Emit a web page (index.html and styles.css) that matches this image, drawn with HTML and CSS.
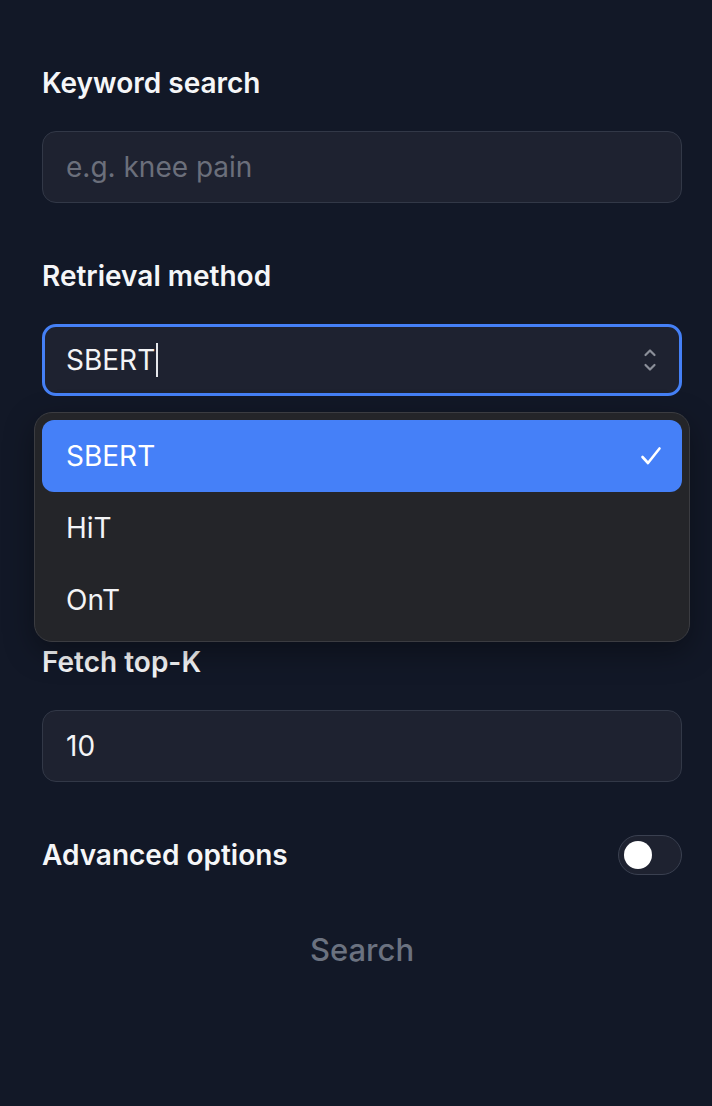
FILE: index.html
```html
<!DOCTYPE html>
<html lang="en">
<head>
<meta charset="utf-8">
<title>Search</title>
<link rel="stylesheet" href="styles.css">
</head>
<body>
<main class="form">
  <div class="field">
    <label class="label">Keyword search</label>
    <div class="input"><span class="placeholder">e.g. knee pain</span></div>
  </div>
  <div class="field field-select">
    <label class="label">Retrieval method</label>
    <div class="select">
      <span class="value">SBERT</span><span class="caret"></span>
      <svg class="chevrons" width="16" height="28" viewBox="0 0 16 28" fill="none" stroke="#8b8f99" stroke-width="2.2" stroke-linecap="round" stroke-linejoin="round"><path d="M3.5 9 L8 4.5 L12.5 9"/><path d="M3.5 19 L8 23.5 L12.5 19"/></svg>
    </div>
    <div class="menu">
      <div class="option selected"><span>SBERT</span>
        <svg class="check" width="22" height="20" viewBox="0 0 22 20" fill="none" stroke="#fff" stroke-width="2.6" stroke-linecap="round" stroke-linejoin="round"><path d="M2.5 11 L8 17 L19.5 2.5"/></svg>
      </div>
      <div class="option"><span>HiT</span></div>
      <div class="option"><span>OnT</span></div>
    </div>
  </div>
  <div class="field covered" aria-hidden="true">
    <div class="label"></div>
    <div class="input"></div>
  </div>
  <div class="field">
    <label class="label">Fetch top-K</label>
    <div class="input"><span class="text">10</span></div>
  </div>
  <div class="row">
    <span class="label">Advanced options</span>
    <div class="toggle"><div class="knob"></div></div>
  </div>
  <div class="button">Search</div>
</main>
</body>
</html>
```

FILE: styles.css
```css
* { box-sizing: border-box; }
html, body { margin: 0; padding: 0; }
body {
  background: #121827;
  font-family: "Inter", "Noto Sans", sans-serif;
  color: #f3f4f6;
  width: 712px;
  height: 1106px;
  overflow: hidden;
}
.form {
  padding: 66px 30px 0 42px;
  width: 712px;
  display: flex;
  flex-direction: column;
}
.field {
  display: flex;
  flex-direction: column;
  margin-bottom: 56px;
}
.covered { visibility: hidden; }
.field-select { position: relative; }
.label {
  font-size: 28px;
  font-weight: 600;
  line-height: 34px;
  height: 34px;
  color: #f5f6f8;
}
.field .label { margin-bottom: 31px; }
.input {
  height: 72px;
  border: 1.5px solid #323847;
  background: #1e2230;
  border-radius: 14px;
  display: flex;
  align-items: center;
  padding-left: 23px;
  font-size: 28px;
}
.placeholder { color: #6b6f7b; }
.text { color: #f3f4f6; }
.select {
  height: 72px;
  border: 3px solid #4580f6;
  background: #1e2230;
  border-radius: 14px;
  display: flex;
  align-items: center;
  padding-left: 21px;
  padding-right: 21px;
  font-size: 28px;
}
.select .value { color: #f3f4f6; }
.caret {
  display: inline-block;
  width: 2px;
  height: 34px;
  background: #e5e7eb;
  margin-left: 1px;
}
.chevrons { margin-left: auto; }
.menu {
  position: absolute;
  top: 153px;
  left: -8px;
  width: 656px;
  height: 230px;
  background: #242529;
  border: 1.5px solid #3b3c41;
  border-radius: 18px;
  padding: 7px;
  box-shadow: 0 10px 30px rgba(0,0,0,0.35);
  z-index: 10;
  display: flex;
  flex-direction: column;
}
.option {
  height: 72px;
  flex: none;
  display: flex;
  align-items: center;
  justify-content: space-between;
  padding: 0 20px 0 24px;
  font-size: 28px;
  color: #f3f4f6;
  border-radius: 12px;
}
.option.selected { background: #4580f8; color: #fff; }
.row {
  display: flex;
  align-items: center;
  justify-content: space-between;
  height: 40px;
  margin-top: -3px;
}
.row .label { line-height: 40px; height: 40px; }
.toggle {
  width: 64px;
  height: 40px;
  border-radius: 20px;
  border: 1.5px solid #3a4050;
  background: #1e2230;
  display: flex;
  align-items: center;
  padding-left: 5px;
}
.knob {
  width: 28px;
  height: 28px;
  border-radius: 50%;
  background: #ffffff;
}
.button {
  margin-top: 38px;
  height: 72px;
  display: flex;
  align-items: center;
  justify-content: center;
  font-size: 31px;
  font-weight: 500;
  color: #6b7280;
}
```
